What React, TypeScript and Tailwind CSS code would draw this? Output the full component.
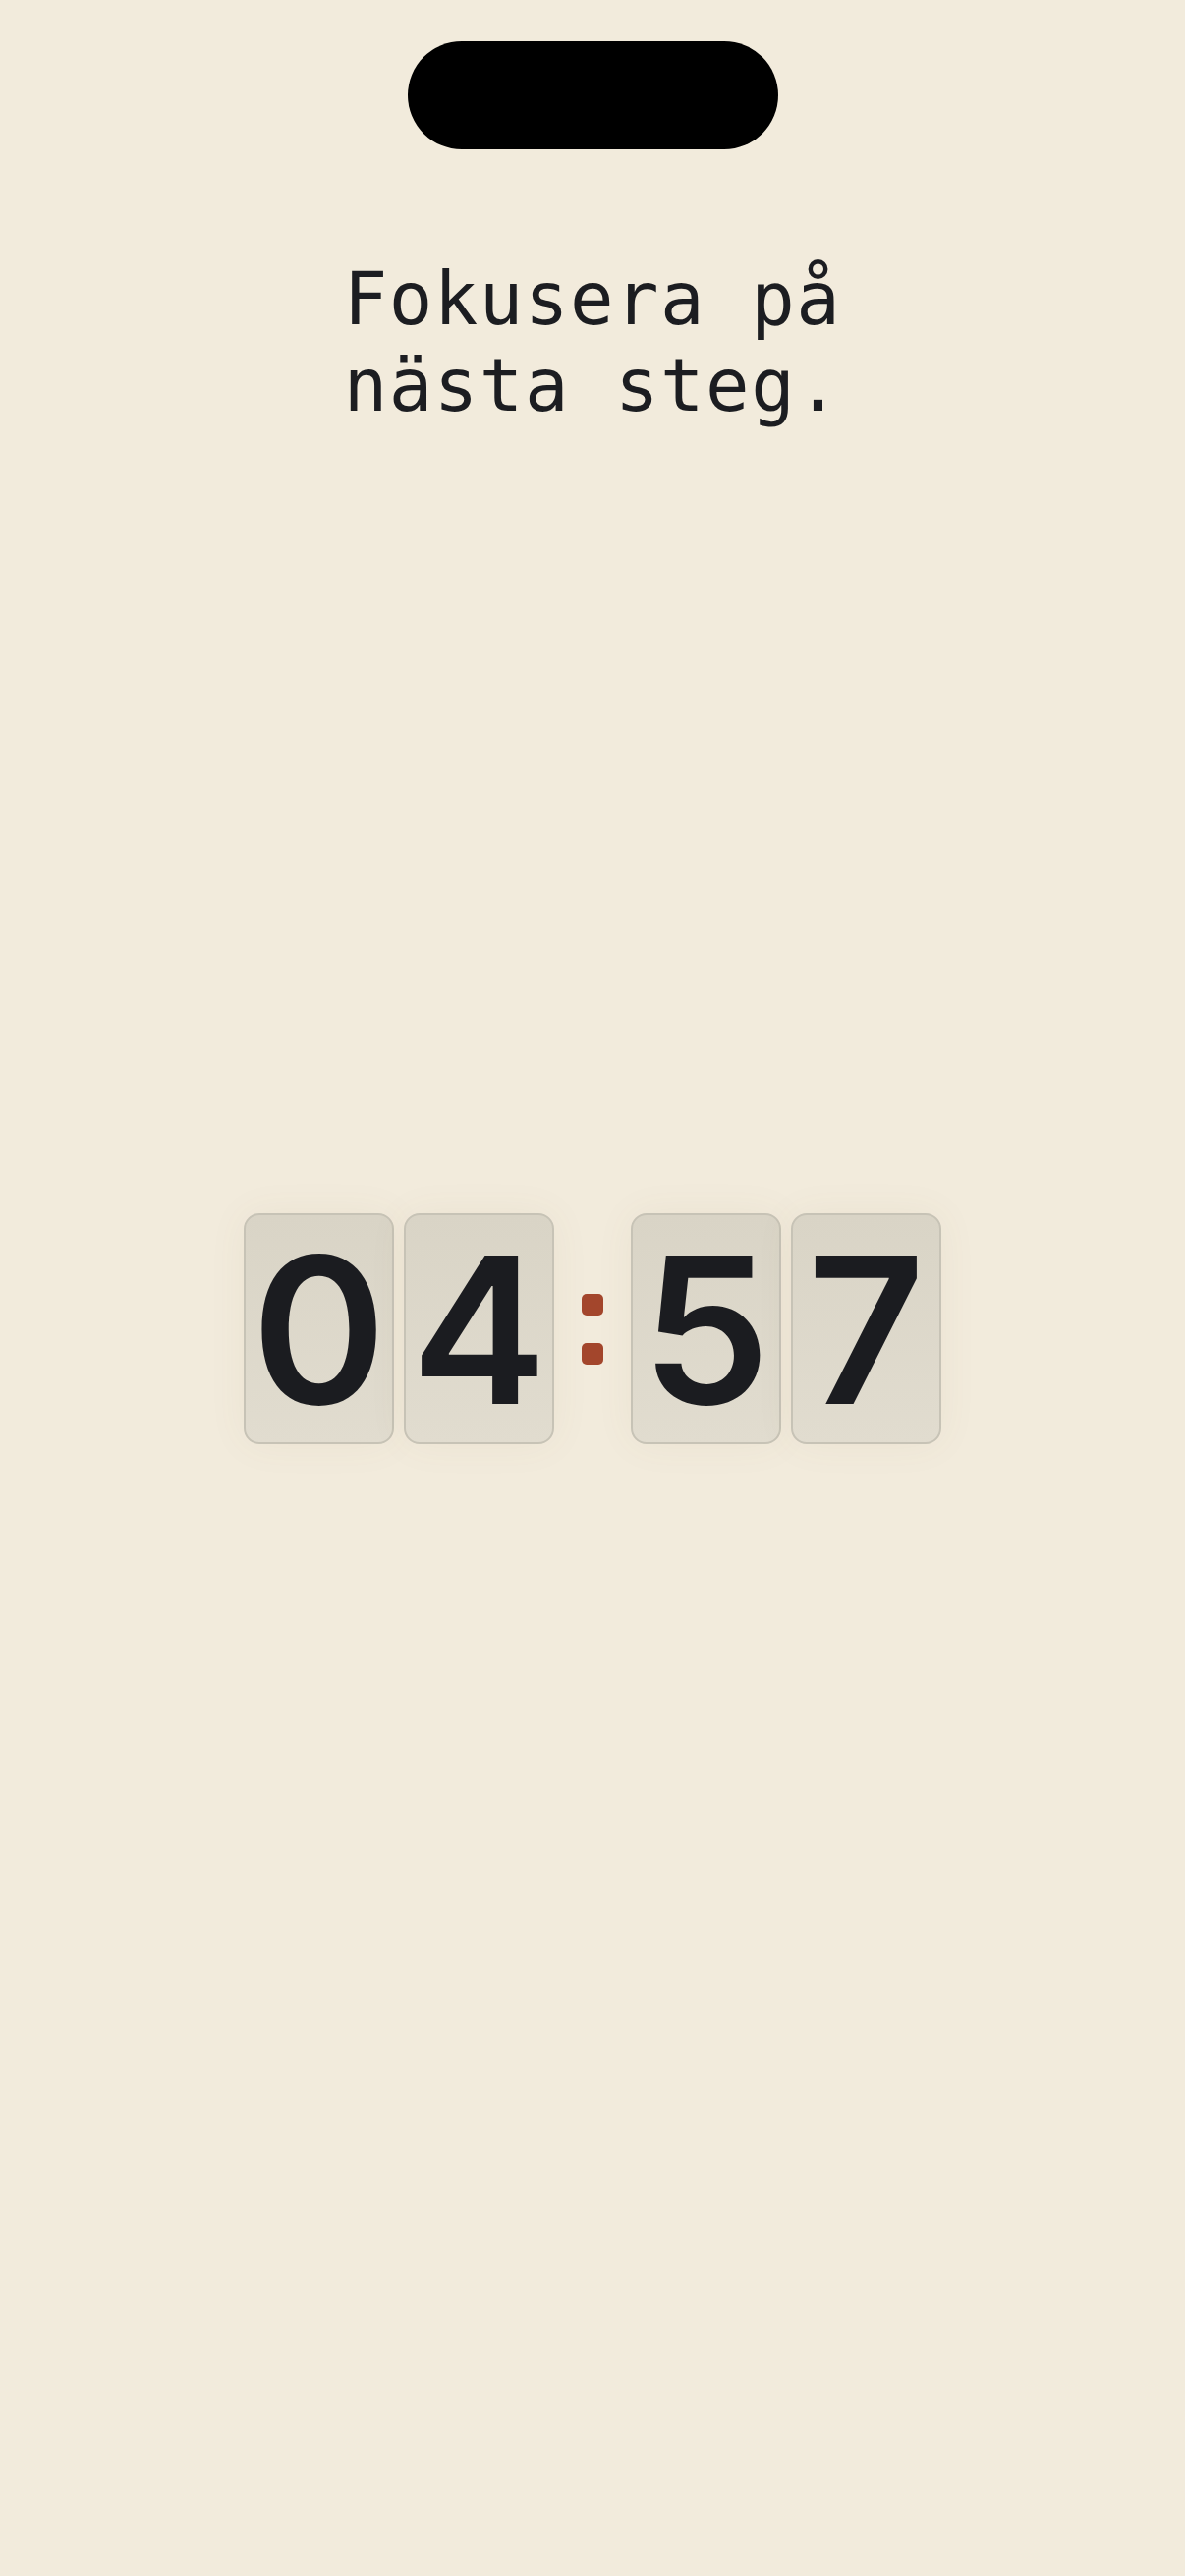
import React from 'react'

const DIGITS_LEFT = ['0', '4']
const DIGITS_RIGHT = ['5', '7']

function FlipCard({ d }: { d: string }) {
  return (
    <div className="w-[153px] h-[235px] rounded-[16px] border-2 border-[#c7c3b6] bg-gradient-to-b from-[#d9d4c6] to-[#e1dccf] shadow-[0_0_40px_rgba(120,100,60,0.06)] flex items-center justify-center">
      <span className="text-[208px] leading-none font-semibold text-[#1b1c20] font-['Inter',sans-serif]">{d}</span>
    </div>
  )
}

export default function App() {
  return (
    <div className="min-h-[2622px] w-full bg-[#f2ebdc] flex flex-col items-center">
      {/* dynamic island */}
      <div className="mt-[42px] w-[377px] h-[110px] rounded-full bg-black" />

      <div className="w-full mt-[108px] text-center">
        <h1 className="text-[74px] leading-[88px] tracking-[1.5px] text-[#1c1d21] font-['DejaVu_Sans_Mono',monospace] font-normal">
          Fokusera på
          <br />
          nästa steg.
        </h1>
      </div>

      <div className="mt-[799px] flex items-center">
        <div className="flex gap-[10px]">
          {DIGITS_LEFT.map((d, i) => <FlipCard key={i} d={d} />)}
        </div>
        <div className="mx-[28px] flex flex-col gap-[28px]">
          <span className="block w-[22px] h-[22px] rounded-[5px] bg-[#a3462c]" />
          <span className="block w-[22px] h-[22px] rounded-[5px] bg-[#a3462c]" />
        </div>
        <div className="flex gap-[10px]">
          {DIGITS_RIGHT.map((d, i) => <FlipCard key={i} d={d} />)}
        </div>
      </div>
    </div>
  )
}
